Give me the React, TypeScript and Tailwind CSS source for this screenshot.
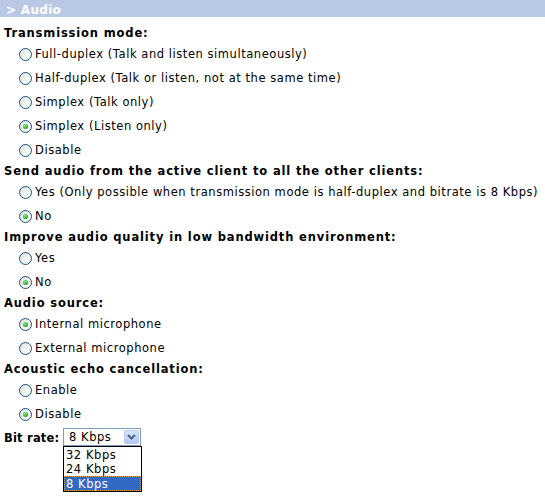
import React from "react";

function Radio({ checked }: { checked?: boolean }) {
  return (
    <span className="relative inline-flex h-[13px] w-[13px] shrink-0 items-center justify-center rounded-full border border-[#1c5180] bg-gradient-to-br from-[#dcdcd7] via-[#f2f2ee] to-white">
      {checked && (
        <span className="h-[5px] w-[5px] rounded-full bg-[radial-gradient(circle_at_40%_35%,#8ef08a,#21a121_70%)]" />
      )}
    </span>
  );
}

function Heading({ children }: { children: React.ReactNode }) {
  return (
    <div className="flex h-[18px] items-center whitespace-nowrap pl-[4px] font-bold tracking-[0.85px]">
      <span className="relative top-[1px]">{children}</span>
    </div>
  );
}

function Opt({ label, checked }: { label: string; checked?: boolean }) {
  return (
    <div className="flex h-[24px] items-center pl-[19px]">
      <Radio checked={checked} />
      <span className="relative top-[1px] ml-[3px] whitespace-nowrap">{label}</span>
    </div>
  );
}

export default function App() {
  return (
    <div
      className="h-[503px] w-[545px] overflow-hidden bg-white text-[11.5px] leading-none tracking-[0.55px] text-black"
      style={{ fontFamily: '"DejaVu Sans", Verdana, sans-serif' }}
    >
      <div className="flex h-[17px] items-center bg-[#b9c9e5] pl-[6px] text-[12px] font-bold tracking-[0.3px] text-white">
        <span className="relative top-[1px]">&gt; Audio</span>
      </div>
      <div className="mt-[7px]">
        <Heading>Transmission mode:</Heading>
        <Opt label="Full-duplex (Talk and listen simultaneously)" />
        <Opt label="Half-duplex (Talk or listen, not at the same time)" />
        <Opt label="Simplex (Talk only)" />
        <Opt label="Simplex (Listen only)" checked />
        <Opt label="Disable" />
        <Heading>Send audio from the active client to all the other clients:</Heading>
        <Opt label="Yes (Only possible when transmission mode is half-duplex and bitrate is 8 Kbps)" />
        <Opt label="No" checked />
        <Heading>Improve audio quality in low bandwidth environment:</Heading>
        <Opt label="Yes" />
        <Opt label="No" checked />
        <Heading>Audio source:</Heading>
        <Opt label="Internal microphone" checked />
        <Opt label="External microphone" />
        <Heading>Acoustic echo cancellation:</Heading>
        <Opt label="Enable" />
        <Opt label="Disable" checked />
        <div className="flex items-start pl-[4px] pt-[2px]">
          <span className="mt-[5px] w-[59px] whitespace-nowrap font-bold tracking-[0.2px]">Bit rate:</span>
          <div className="relative">
            <div className="flex h-[18px] w-[78px] items-center justify-between border border-[#7f9db9] bg-white pl-[5px] pr-[1px]">
              <span className="relative top-[1px]">8 Kbps</span>
              <span className="flex h-[14px] w-[15px] items-center justify-center rounded-[2px] border border-[#b9c9ef] bg-gradient-to-b from-[#d6e3fd] to-[#b3c8f5]">
                <svg width="9" height="6" viewBox="0 0 9 6">
                  <path d="M1 1 L4.5 4.5 L8 1" fill="none" stroke="#4d6185" strokeWidth="2" />
                </svg>
              </span>
            </div>
            <div className="w-[79px] border border-black bg-white">
              <div className="flex h-[15px] items-center pl-[2px] pt-[3px]">32 Kbps</div>
              <div className="flex h-[14px] items-center pl-[2px] pt-[2px]">24 Kbps</div>
              <div className="flex h-[15px] items-center border border-dotted border-[#e8a33a] bg-[#316ac5] pl-[1px] pt-[2px] text-white">
                8 Kbps
              </div>
            </div>
          </div>
        </div>
      </div>
    </div>
  );
}
